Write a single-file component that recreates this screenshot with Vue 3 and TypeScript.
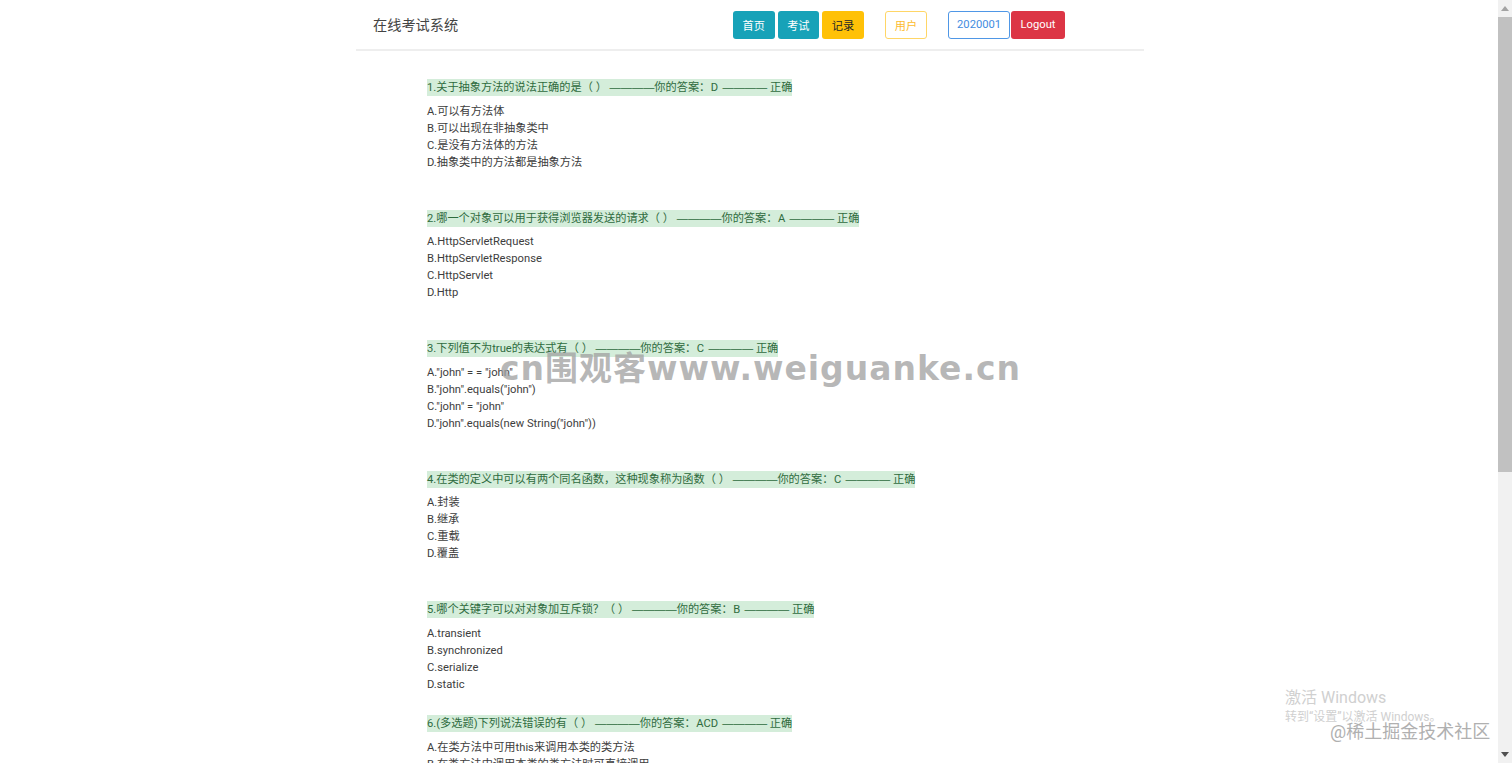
<script setup lang="ts">
interface Question {
  title: string
  answer: string
  options: string[]
  tight?: boolean
}

const buttons = [
  { label: '首页', cls: 'btn-info' },
  { label: '考试', cls: 'btn-info' },
  { label: '记录', cls: 'btn-warning' },
  { label: '用户', cls: 'btn-outline-warning spaced' },
  { label: '2020001', cls: 'btn-outline-primary spaced' },
  { label: 'Logout', cls: 'btn-danger snug' },
]

const questions: Question[] = [
  {
    title: '1.关于抽象方法的说法正确的是（ ）',
    answer: 'D',
    options: ['A.可以有方法体', 'B.可以出现在非抽象类中', 'C.是没有方法体的方法', 'D.抽象类中的方法都是抽象方法'],
  },
  {
    title: '2.哪一个对象可以用于获得浏览器发送的请求（ ）',
    answer: 'A',
    options: ['A.HttpServletRequest', 'B.HttpServletResponse', 'C.HttpServlet', 'D.Http'],
  },
  {
    title: '3.下列值不为true的表达式有（ ）',
    answer: 'C',
    options: ['A."john" = = "john"', 'B."john".equals("john")', 'C."john" = "john"', 'D."john".equals(new String("john"))'],
  },
  {
    title: '4.在类的定义中可以有两个同名函数，这种现象称为函数（ ）',
    answer: 'C',
    options: ['A.封装', 'B.继承', 'C.重载', 'D.覆盖'],
  },
  {
    title: '5.哪个关键字可以对对象加互斥锁？（ ）',
    answer: 'B',
    options: ['A.transient', 'B.synchronized', 'C.serialize', 'D.static'],
    tight: true,
  },
  {
    title: '6.(多选题)下列说法错误的有（ ）',
    answer: 'ACD',
    options: ['A.在类方法中可用this来调用本类的类方法', 'B.在类方法中调用本类的类方法时可直接调用'],
  },
]
</script>

<template>
  <div class="window">
    <div class="page">
      <nav class="navbar">
        <span class="brand">在线考试系统</span>
        <div class="nav-buttons">
          <a v-for="b in buttons" :key="b.label" :class="['btn', b.cls]">{{ b.label }}</a>
        </div>
      </nav>

      <main class="content">
        <section v-for="q in questions" :key="q.title" :class="['question', { tight: q.tight }]">
          <p class="title">
            <mark>{{ q.title }} <span class="dash">————</span>你的答案：<span class="answer">{{ q.answer }}</span> <span class="dash">————</span> 正确</mark>
          </p>
          <p class="options">
            <span v-for="opt in q.options" :key="opt">{{ opt }}</span>
          </p>
        </section>
      </main>

      <div class="watermark">cn围观客www.weiguanke.cn</div>
      <div class="activate">
        <div class="activate-title">激活 Windows</div>
        <div class="activate-sub">转到“设置”以激活 Windows。</div>
      </div>
      <div class="juejin">@稀土掘金技术社区</div>
    </div>

    <div class="scrollbar">
      <svg class="arrow" viewBox="0 0 14 17" width="14" height="17">
        <path d="M7 6 L11 11 L3 11 Z" fill="#a3a3a3" />
      </svg>
      <div class="track">
        <div class="thumb"></div>
      </div>
      <svg class="arrow" viewBox="0 0 14 17" width="14" height="17">
        <path d="M3 6 L11 6 L7 11 Z" fill="#505050" />
      </svg>
    </div>
  </div>
</template>

<style scoped>
.window {
  display: flex;
  height: 763px;
  overflow: hidden;
  background: #fff;
  font-family: Roboto, "Noto Sans CJK SC", sans-serif;
  color: #3d3d3d;
}

.page {
  position: relative;
  flex: 1;
  min-width: 0;
}

.navbar {
  display: flex;
  align-items: center;
  justify-content: space-between;
  box-sizing: border-box;
  width: 788px;
  height: 51px;
  margin-left: 356px;
  padding: 0 79px 0 17px;
  border-bottom: 2px solid #eeeeee;
}

.brand {
  margin-bottom: 2px;
  font-size: 14.2px;
  color: #444;
}

.nav-buttons {
  display: flex;
  gap: 3px;
}

.btn {
  display: flex;
  align-items: center;
  justify-content: center;
  box-sizing: border-box;
  height: 28px;
  padding: 0 9px;
  border: 1px solid transparent;
  border-radius: 3px;
  font-size: 11.2px;
}

.btn-info {
  padding: 0 8.6px;
  background: #17a2b8;
  color: #fff;
}

.btn-warning {
  padding: 0 8.6px;
  background: #ffc107;
  color: #212529;
}

.btn-danger {
  padding: 0 8.5px;
  background: #dc3545;
  color: #fff;
}

.btn-outline-warning {
  border-color: #ffd666;
  color: #fdbb2d;
}

.btn-outline-primary {
  padding: 0 8px;
  border-color: #4f97e6;
  color: #3f8ce0;
}

.spaced {
  margin-left: 18px;
}

.snug {
  margin-left: -2px;
}

.content {
  padding: 28px 0 0 427px;
}

.question {
  padding-bottom: 39px;
}

.question.tight {
  padding-bottom: 22.5px;
}

.title {
  margin: 0 0 6.5px;
  height: 17px;
  font-size: 11.2px;
  line-height: 17px;
}

.title mark {
  display: inline-block;
  height: 17px;
  background: #d4edda;
  color: #2f6b3e;
}

.dash {
  font-family: "Liberation Sans", sans-serif;
}

.answer {
  margin: 0 1.5px 0 0.5px;
}

.options {
  display: flex;
  flex-direction: column;
  margin: 0;
  font-size: 11.2px;
  line-height: 17px;
}

.watermark {
  position: absolute;
  left: 500px;
  top: 347px;
  font-family: "DejaVu Sans", "Noto Sans CJK SC", sans-serif;
  font-size: 33px;
  font-weight: 700;
  letter-spacing: 1px;
  line-height: 44px;
  white-space: nowrap;
  color: rgba(160, 160, 160, 0.75);
}

.activate {
  position: absolute;
  left: 1285px;
  top: 688px;
  color: #d0d0d0;
}

.activate-title {
  font-size: 16px;
  line-height: 20px;
}

.activate-sub {
  font-size: 12px;
  line-height: 18px;
}

.juejin {
  position: absolute;
  left: 1330px;
  top: 720px;
  font-size: 18px;
  line-height: 23px;
  white-space: nowrap;
  color: #b0b0b0;
}

.scrollbar {
  display: flex;
  flex-direction: column;
  flex: 0 0 14px;
  background: #f1f1f1;
}

.arrow {
  display: block;
  flex: none;
}

.track {
  flex: 1;
}

.thumb {
  height: 455px;
  background: #c1c1c1;
}
</style>

<style>
html,
body {
  margin: 0;
  overflow: hidden;
}
</style>
